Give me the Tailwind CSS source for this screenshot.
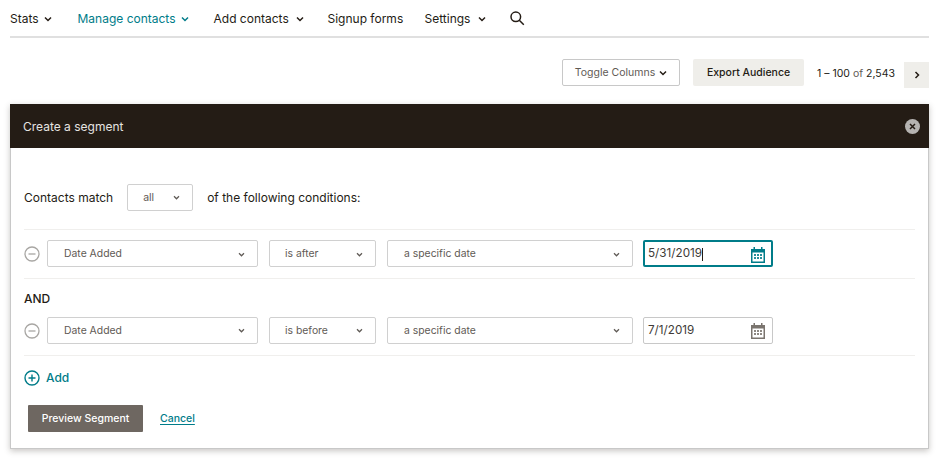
<!DOCTYPE html>
<html lang="en">
<head>
<meta charset="UTF-8">
<title>Create a segment</title>
<script src="https://cdn.jsdelivr.net/npm/@tailwindcss/browser@4"></script>
</head>
<body class="bg-white font-['Inter',sans-serif] text-[#241c15] w-[940px] h-[464px] overflow-hidden">
<div class="pl-[10px] pr-[11px]">

  <!-- nav -->
  <nav class="h-[38px] border-b-2 border-[#e0e0e0] flex items-center text-[12px] pt-[1px]">
    <a class="flex items-center w-[67.5px]">Stats
      <svg class="ml-[5px]" width="8" height="6" viewBox="0 0 8 6" fill="none" stroke="currentColor" stroke-width="1.5"><path d="M1 1.5l3 3 3-3"/></svg></a>
    <a class="flex items-center w-[136px] text-[#007c89]">Manage contacts
      <svg class="ml-[5px]" width="8" height="6" viewBox="0 0 8 6" fill="none" stroke="currentColor" stroke-width="1.5"><path d="M1 1.5l3 3 3-3"/></svg></a>
    <a class="flex items-center w-[114px]">Add contacts
      <svg class="ml-[7px]" width="8" height="6" viewBox="0 0 8 6" fill="none" stroke="currentColor" stroke-width="1.5"><path d="M1 1.5l3 3 3-3"/></svg></a>
    <a class="w-[97px]">Signup forms</a>
    <a class="flex items-center w-[85px]">Settings
      <svg class="ml-[8px]" width="8" height="6" viewBox="0 0 8 6" fill="none" stroke="currentColor" stroke-width="1.5"><path d="M1 1.5l3 3 3-3"/></svg></a>
    <svg class="mb-[1px]" width="15" height="15" viewBox="0 0 15 15" fill="none" stroke="currentColor" stroke-width="1.5"><circle cx="5.800" cy="5.800" r="4.800"/><path d="M9.300 9.300l4.500 4.500"/></svg>
  </nav>

  <!-- toolbar -->
  <div class="flex justify-end items-start mt-[21px] h-[45px]">
    <button class="w-[118px] h-[27px] border border-[#c8c8c8] rounded-[2px] text-[10.5px] text-[#5f5a55] flex items-center justify-center">Toggle Columns
      <svg class="ml-[4px]" width="8" height="6" viewBox="0 0 8 6" fill="none" stroke="#241c15" stroke-width="1.5"><path d="M1 1.5l3 3 3-3"/></svg></button>
    <button class="ml-[13px] w-[111px] h-[27px] bg-[#efeeea] rounded-[2px] text-[10.5px] font-medium">Export Audience</button>
    <div class="ml-[13px] w-[87px] h-[29px] flex items-center text-[10.5px]"><span>1 – 100 <span class="text-[#5f5a55]">of</span> 2,543</span></div>
    <button class="w-[25px] h-[26px] mt-[3px] bg-[#efeeea] flex items-center justify-center">
      <svg width="6" height="8" viewBox="0 0 6 8" fill="none" stroke="currentColor" stroke-width="1.5"><path d="M1.5 1l3 3-3 3"/></svg></button>
  </div>

  <!-- panel -->
  <section class="w-[919px] h-[345px] shadow-[0_2px_6px_rgba(36,28,21,0.25)]">
    <header class="h-[44px] bg-[#241c15] flex items-center justify-between pl-[13px] pr-[9px] pt-[1px] text-[12px] text-[#e6e4e1]">
      <span>Create a segment</span>
      <span class="w-[15px] h-[15px] rounded-full bg-[#b5b3b1] flex items-center justify-center">
        <svg width="7" height="7" viewBox="0 0 7 7" fill="none" stroke="#241c15" stroke-width="1.5"><path d="M1 1l5 5M6 1L1 6"/></svg></span>
    </header>
    <div class="h-[301px] border border-t-0 border-[#c8c8c8] pl-[13px] pr-[13px] text-[12px]">

      <div class="flex items-center h-[82px] border-b border-[#f0efed] pt-[36px] pb-[18px]">
        <span>Contacts match</span>
        <div class="ml-[14px] w-[66px] h-[27px] border border-[#d0d0d0] rounded-[2px] flex items-center justify-between pl-[15px] pr-[12px] text-[10.5px] text-[#5f5a55]">all
          <svg width="7" height="5" viewBox="0 0 8 6" fill="none" stroke="currentColor" stroke-width="1.5"><path d="M1 1.5l3 3 3-3"/></svg></div>
        <span class="ml-[14px]">of the following conditions:</span>
      </div>

      <div class="flex items-center h-[49px] border-b border-[#f0efed] pt-[10px] pb-[11px]">
        <svg width="16" height="16" viewBox="0 0 16 16" fill="none" stroke="#a8a6a3" stroke-width="1.3"><circle cx="8" cy="8" r="7"/><path d="M4.500 8h7"/></svg>
        <div class="ml-[7px] w-[211px] h-[27px] border border-[#d0d0d0] rounded-[2px] flex items-center justify-between pt-px pl-[16px] pr-[12px] text-[10.4px] text-[#5f5a55]">Date Added
          <svg width="7" height="5" viewBox="0 0 8 6" fill="none" stroke="currentColor" stroke-width="1.5"><path d="M1 1.5l3 3 3-3"/></svg></div>
        <div class="ml-[11px] w-[107px] h-[27px] border border-[#d0d0d0] rounded-[2px] flex items-center justify-between pt-px pl-[15px] pr-[12px] text-[10.4px] text-[#5f5a55]">is after
          <svg width="7" height="5" viewBox="0 0 8 6" fill="none" stroke="currentColor" stroke-width="1.5"><path d="M1 1.5l3 3 3-3"/></svg></div>
        <div class="ml-[11px] w-[246px] h-[27px] border border-[#d0d0d0] rounded-[2px] flex items-center justify-between pt-px pl-[16px] pr-[12px] text-[10.4px] text-[#5f5a55]">a specific date
          <svg width="7" height="5" viewBox="0 0 8 6" fill="none" stroke="currentColor" stroke-width="1.5"><path d="M1 1.5l3 3 3-3"/></svg></div>
        <div class="ml-[10px] w-[130px] h-[27px] border-2 border-[#007c89] rounded-[2px] flex items-center justify-between pt-px pl-[3px] pr-[5px] text-[11.700px] text-[#403b37]">
          <span>5/31/2019<span class="inline-block w-px h-[13px] bg-[#241c15] align-middle"></span></span>
          <svg width="16" height="17" viewBox="0 0 16 17" fill="#007c89"><path d="M1 3h2.500V1h1.500v2h6V1h1.500v2H15v14H1zM2.500 6.500v9h11v-9z"/><path d="M4 8h2v2H4zM7 8h2v2H7zM10 8h2v2h-2zM7 11h2v2H7zM10 11h2v2h-2zM4 11h2v2H4z" opacity="0.85"/></svg>
        </div>
      </div>

      <div class="flex items-center h-[38px] font-medium pt-[2px]">AND</div>

      <div class="flex items-center h-[39px] border-b border-[#f0efed] pb-[11px]">
        <svg width="16" height="16" viewBox="0 0 16 16" fill="none" stroke="#a8a6a3" stroke-width="1.3"><circle cx="8" cy="8" r="7"/><path d="M4.500 8h7"/></svg>
        <div class="ml-[7px] w-[211px] h-[27px] border border-[#d0d0d0] rounded-[2px] flex items-center justify-between pl-[16px] pr-[12px] text-[10.4px] text-[#5f5a55]">Date Added
          <svg width="7" height="5" viewBox="0 0 8 6" fill="none" stroke="currentColor" stroke-width="1.5"><path d="M1 1.5l3 3 3-3"/></svg></div>
        <div class="ml-[11px] w-[107px] h-[27px] border border-[#d0d0d0] rounded-[2px] flex items-center justify-between pl-[15px] pr-[12px] text-[10.4px] text-[#5f5a55]">is before
          <svg width="7" height="5" viewBox="0 0 8 6" fill="none" stroke="currentColor" stroke-width="1.5"><path d="M1 1.5l3 3 3-3"/></svg></div>
        <div class="ml-[11px] w-[246px] h-[27px] border border-[#d0d0d0] rounded-[2px] flex items-center justify-between pl-[16px] pr-[12px] text-[10.4px] text-[#5f5a55]">a specific date
          <svg width="7" height="5" viewBox="0 0 8 6" fill="none" stroke="currentColor" stroke-width="1.5"><path d="M1 1.5l3 3 3-3"/></svg></div>
        <div class="ml-[10px] w-[130px] h-[27px] border border-[#c8c8c8] rounded-[2px] flex items-center justify-between pl-[4px] pr-[6px] text-[11.700px] text-[#403b37]">
          <span>7/1/2019</span>
          <svg width="16" height="17" viewBox="0 0 16 17" fill="#7a746e"><path d="M1 3h2.500V1h1.500v2h6V1h1.500v2H15v14H1zM2.500 6.500v9h11v-9z"/><path d="M4 8h2v2H4zM7 8h2v2H7zM10 8h2v2h-2zM7 11h2v2H7zM10 11h2v2h-2zM4 11h2v2H4z" opacity="0.85"/></svg>
        </div>
      </div>

      <div class="flex items-center h-[44px] text-[#007c89] font-medium">
        <svg width="16" height="16" viewBox="0 0 16 16" fill="none" stroke="currentColor" stroke-width="1.4"><circle cx="8" cy="8" r="7"/><path d="M4.500 8h7M8 4.500v7"/></svg>
        <span class="ml-[6px]">Add</span>
      </div>

      <div class="flex items-center mt-[5px] pl-[4px]">
        <button class="w-[115px] h-[27px] bg-[#6e6761] text-white rounded-[1px] text-[10.500px] font-medium">Preview Segment</button>
        <a class="ml-[17px] text-[10.500px] font-medium text-[#007c89] underline underline-offset-2">Cancel</a>
      </div>
    </div>
  </section>
</div>
</body>
</html>
